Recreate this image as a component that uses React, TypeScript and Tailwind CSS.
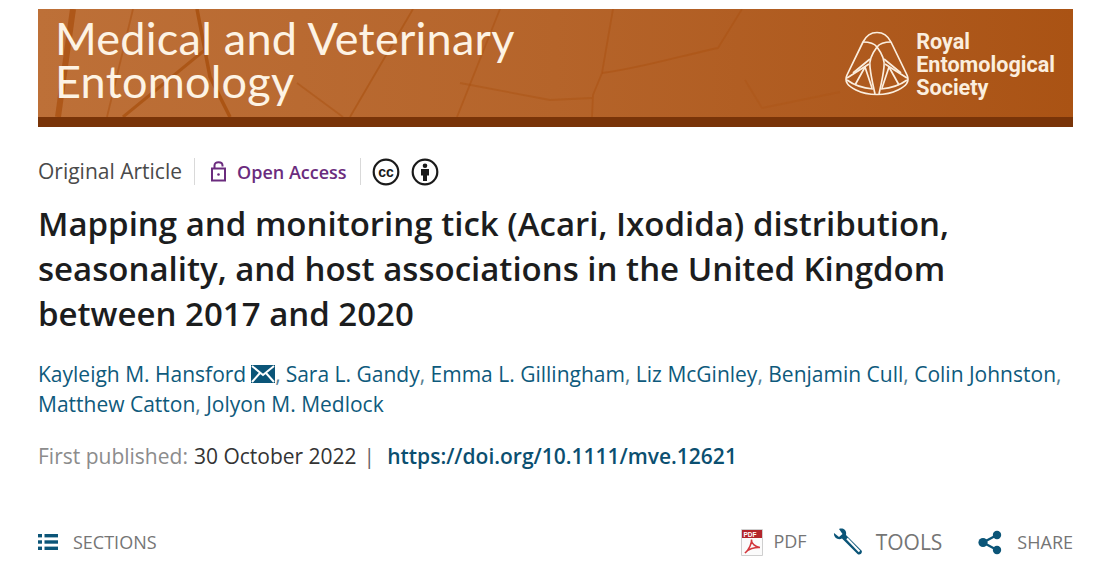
export default function App() {
  return (
    <div className="w-[1103px] h-[576px] bg-white overflow-hidden pt-[9px] pl-[38px] pr-[30px] font-['Open_Sans',sans-serif]">
      <div className="w-[1035px] h-[118px] relative overflow-hidden flex flex-col bg-gradient-to-r from-[#bd7038] via-[#b5642a] to-[#aa5314]">
        <svg className="absolute inset-0" width="1035" height="108" viewBox="0 0 1035 108" fill="none">
          <g stroke="#ab5414" strokeWidth="1.8">
            <path d="M35 0 L20 108" strokeWidth="6" opacity="0.85" />
            <path d="M95 0 L69 108" opacity="0.6" />
            <path d="M159 0 L172 68 L192 108" strokeWidth="3.5" />
            <path d="M168 40 C150 55 125 75 85 108" strokeWidth="3" opacity="0.9" />
            <path d="M375 0 L312 108" opacity="0.7" />
            <path d="M462 0 L419 108" opacity="0.6" />
            <path d="M259 74 L305 108" opacity="0.55" />
            <path d="M422 74 L512 91 L554 89" opacity="0.5" />
            <path d="M575 0 L564 64 L555 86 L554 108" opacity="0.6" />
            <path d="M564 64 C600 60 650 45 680 39 L704 0" opacity="0.6" />
            <path d="M707 71 L724 99 L802 83" opacity="0.35" />
          </g>
        </svg>
        <div className="relative h-[108px] flex justify-between">
          <div className="pl-[17px] pt-[8px] text-[#fdf3e4] font-['Lato',sans-serif] text-[45px] leading-[43px] tracking-[0.25px] whitespace-nowrap">
            <div>Medical and Veterinary</div>
            <div>Entomology</div>
          </div>
          <div className="flex items-center pr-[18px] gap-[7px] pt-[1px]">
            <svg width="64" height="66" viewBox="0 0 64 66" fill="none" stroke="#fbeede" strokeWidth="1.7" strokeLinejoin="round">
              <path d="M32 1.5 C25 1.5 21 5 18 11 L2 44 C-1 51 3 55 11 59 C23 65 41 65 53 59 C61 55 65 51 62 44 L46 11 C43 5 39 1.5 32 1.5 Z" />
              <path d="M18 11 C25 11 29 12 32 16 C35 12 39 11 46 11" />
              <path d="M32 16 C26 24 24 30 25 36 C26 46 28 54 30 63" />
              <path d="M32 16 C38 24 40 30 39 36 C38 46 36 54 34 63" />
              <path d="M25 28 L8 42 M39 28 L56 42" />
              <path d="M2 47 L24 33 M62 47 L40 33" />
              <path d="M20 36 L10 54 M44 36 L54 54" />
              <path d="M20 36 L27 57 M44 36 L37 57" />
              <path d="M2 49 C10 55 18 57 28 58 M62 49 C54 55 46 57 36 58" />
            </svg>
            <div className="text-[#fbeede] font-['Roboto',sans-serif] font-bold text-[21.6px] leading-[23px] pt-[2px] whitespace-nowrap">
              <div>Royal</div>
              <div>Entomological</div>
              <div>Society</div>
            </div>
          </div>
        </div>
        <div className="relative h-[10px] bg-[#793408]" />
      </div>

      <div className="h-[29px] mt-[30px] flex items-center text-[21px] text-[#4a4a4a] whitespace-nowrap">
        <span className="leading-[29px]">Original Article</span>
        <div className="w-px h-[27px] bg-[#d9d9d9] ml-[12px]" />
        <svg className="ml-[16px]" width="15" height="21" viewBox="0 0 15 21" fill="none" stroke="#6b2c7e" strokeWidth="2">
          <rect x="1" y="7.5" width="13" height="12" />
          <path d="M3.5 7 V4.5 C3.5 2.5 5.2 1.2 7.5 1.2 C9.8 1.2 11.5 2.5 11.5 4.5 V5.5" />
          <circle cx="7.5" cy="13.5" r="1.3" fill="#6b2c7e" stroke="none" />
        </svg>
        <span className="ml-[11px] mt-[2px] text-[18px] font-semibold text-[#6b2c7e] leading-[29px]">Open Access</span>
        <div className="w-px h-[27px] bg-[#d9d9d9] ml-[13px]" />
        <svg className="ml-[11px]" width="28" height="28" viewBox="0 0 28 28" fill="none">
          <circle cx="14" cy="14" r="12.3" stroke="#1a1a1a" strokeWidth="2.2" />
          <text x="14" y="18.8" textAnchor="middle" fontFamily="Liberation Sans" fontWeight="700" fontSize="14" fill="#1a1a1a">cc</text>
        </svg>
        <svg className="ml-[11px]" width="28" height="28" viewBox="0 0 28 28" fill="none">
          <circle cx="14" cy="14" r="12.3" stroke="#1a1a1a" strokeWidth="2.2" />
          <circle cx="14" cy="7.8" r="2.3" fill="#1a1a1a" />
          <path d="M10 11 H18 V17.5 H16 V23 H12 V17.5 H10 Z" fill="#1a1a1a" />
        </svg>
      </div>

      <h1 className="mt-[15px] text-[33px] leading-[45px] font-semibold text-[#1c1d1e] whitespace-nowrap">
        Mapping and monitoring tick (Acari, Ixodida) distribution,<br />
        seasonality, and host associations in the United Kingdom<br />
        between 2017 and 2020
      </h1>

      <div className="mt-[23px] text-[21px] leading-[30px] text-[#0e5a7c] whitespace-nowrap">
        <div className="flex items-center">
          <span>Kayleigh M. Hansford</span>
          <svg className="ml-[5px]" width="24" height="18" viewBox="0 0 24 18">
            <rect width="24" height="18" fill="#0b5578" />
            <path d="M1 1 L12 10 L23 1 M1 17 L9 8 M23 17 L15 8" stroke="#fff" strokeWidth="2" fill="none" />
          </svg>
          <span className="text-[#5a7f92]">,</span>
          <span className="ml-[5px]">Sara L. Gandy<span className="text-[#5a7f92]">,</span> Emma L. Gillingham<span className="text-[#5a7f92]">,</span> Liz McGinley<span className="text-[#5a7f92]">,</span> Benjamin Cull<span className="text-[#5a7f92]">,</span> Colin Johnston<span className="text-[#5a7f92]">,</span></span>
        </div>
        <div>Matthew Catton<span className="text-[#5a7f92]">,</span> Jolyon M. Medlock</div>
      </div>

      <div className="mt-[22px] flex text-[21px] leading-[30px] whitespace-nowrap">
        <span className="text-[#8c8c8c]">First published:</span>
        <span className="ml-[6px] text-[#333]">30 October 2022</span>
        <span className="ml-[7px] text-[#666]">|</span>
        <span className="ml-[12px] font-semibold text-[#0b4f70]">https://doi.org/10.1111/mve.12621</span>
      </div>

      <div className="mt-[56px] flex items-center justify-between h-[30px]">
        <div className="flex items-center">
          <svg width="20" height="16" viewBox="0 0 20 16" fill="#0b5578">
            <rect x="0" y="0" width="4" height="3.4" />
            <rect x="6.5" y="0" width="13.5" height="3.4" />
            <rect x="0" y="6.3" width="4" height="3.4" />
            <rect x="6.5" y="6.3" width="13.5" height="3.4" />
            <rect x="0" y="12.6" width="4" height="3.4" />
            <rect x="6.5" y="12.6" width="13.5" height="3.4" />
          </svg>
          <span className="ml-[15px] text-[18px] text-[#757575]">SECTIONS</span>
        </div>
        <div className="flex items-center">
          <svg width="22" height="27" viewBox="0 0 22 27" fill="none">
            <path d="M0.5 0.5 H21.5 V26.5 H0.5 Z" fill="#fbfbfb" stroke="#cfcfcf" />
            <rect x="1" y="1" width="20" height="8" fill="#b3252b" />
            <text x="9" y="7.5" textAnchor="middle" fontFamily="Liberation Sans" fontWeight="700" fontSize="6.5" fill="#fff">PDF</text>
            <path d="M4 24 C8 21 11 14 10.5 10.5 C10 14 14 18 19 18.5 C14 18 7 20 4 24 Z" stroke="#d3373d" strokeWidth="1.5" />
          </svg>
          <span className="ml-[10px] mb-[2px] text-[18px] text-[#757575]">PDF</span>
          <svg className="ml-[26px]" width="30" height="28" viewBox="0 0 30 28" fill="none">
            <path d="M1 5 L6 9 L9.5 6 L6 1 C10 -0.5 14 2 13 7 L28.5 22.5 C30 24.5 27 28 24.5 26 L9 10.5 C5 12.5 0.5 9.5 1 5 Z" fill="#0b5578" />
            <path d="M14 10.5 L26.5 23.5" stroke="#fff" strokeWidth="2" />
          </svg>
          <span className="ml-[13px] mt-[2px] text-[21px] text-[#757575]">TOOLS</span>
          <svg className="ml-[36px]" width="24" height="25" viewBox="0 0 24 25" fill="#0b5578">
            <circle cx="5" cy="12.5" r="4.6" />
            <circle cx="19" cy="5" r="4.2" />
            <circle cx="19" cy="20" r="4.2" />
            <path d="M5 12.5 L19 5 M5 12.5 L19 20" stroke="#0b5578" strokeWidth="2.4" />
          </svg>
          <span className="ml-[15px] text-[18px] text-[#757575]">SHARE</span>
        </div>
      </div>
    </div>
  );
}
